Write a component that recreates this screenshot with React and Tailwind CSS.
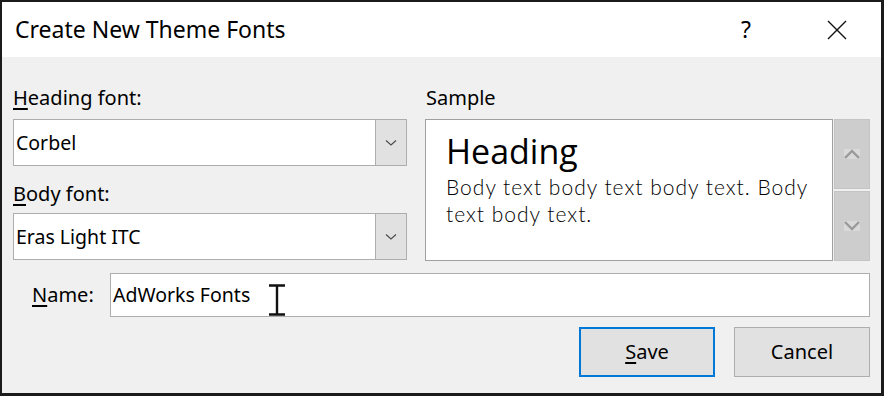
import React from 'react';

const ui = { fontFamily: '"Noto Sans", "Open Sans", sans-serif' };

function ComboArrow() {
  return (
    <svg width="12" height="8" viewBox="0 0 12 8">
      <polyline points="1,1.5 6,6 11,1.5" fill="none" stroke="#4a4a4a" strokeWidth="1.1" />
    </svg>
  );
}

function ComboBox({ value }) {
  return (
    <div className="flex h-[47px] w-full border border-[#adadad] bg-white">
      <div className="flex flex-1 items-center pl-[2px] text-[19.5px] text-black" style={ui}>
        {value}
      </div>
      <div className="flex w-[31px] items-center justify-center border-l border-[#adadad] bg-[#e1e1e1]">
        <ComboArrow />
      </div>
    </div>
  );
}

function ScrollButton({ up }) {
  return (
    <div className="flex flex-1 items-center justify-center border border-[#c4c4c4] bg-[#cdcdcd]">
      <svg width="16" height="10" viewBox="0 0 16 10">
        <rect x="0" y="0" width="16" height="10" fill="#d9d9d9" />
        {up ? (
          <polyline points="1,9 8,2 15,9" fill="none" stroke="#9a9a9a" strokeWidth="2.4" />
        ) : (
          <polyline points="1,1 8,8 15,1" fill="none" stroke="#9a9a9a" strokeWidth="2.4" />
        )}
      </svg>
    </div>
  );
}

export default function App() {
  return (
    <div className="flex h-[396px] w-[884px] flex-col border-t-2 border-l-2 border-r-[3px] border-b-[3px] border-[#1b1b1b] bg-[#f0f0f0]">
      {/* title bar */}
      <div className="flex h-[55px] items-center bg-white pl-[13px]" style={ui}>
        <span className="flex-1 text-[23px] text-black">Create New Theme Fonts</span>
        <span className="mr-[76px] text-[23px] text-black">?</span>
        <svg width="20" height="20" viewBox="0 0 20 20" className="mr-[34px]">
          <path d="M1 1 L19 19 M19 1 L1 19" stroke="#111" strokeWidth="1.4" />
        </svg>
      </div>

      <div className="flex flex-1 flex-col px-[11px] pt-[26px]" style={ui}>
        <div className="flex gap-[18px]">
          {/* left column */}
          <div className="flex w-[394px] flex-col">
            <div className="mb-[6px] flex h-[30px] items-center text-[20px] text-black">
              <span><span className="underline underline-offset-[3px]">H</span>eading font:</span>
            </div>
            <ComboBox value="Corbel" />
            <div className="mt-[13px] mb-[4px] flex h-[30px] items-center text-[20px] text-black">
              <span><span className="underline underline-offset-[3px]">B</span>ody font:</span>
            </div>
            <ComboBox value="Eras Light ITC" />
          </div>

          {/* sample */}
          <div className="flex flex-1 flex-col">
            <div className="mb-[6px] flex h-[30px] items-center pl-[1px] text-[20px] text-black">Sample</div>
            <div className="flex h-[142px] gap-[1px]">
              <div className="flex-1 border border-[#a0a0a0] bg-white pl-[20px] pr-[8px] pt-[11px]">
                <div
                  className="text-[34px] leading-[40px] text-black"
                  style={{ fontFamily: '"Open Sans", "Noto Sans", sans-serif' }}
                >
                  Heading
                </div>
                <div
                  className="mt-[2px] text-[21px] font-light leading-[27px] tracking-[1px] text-black"
                  style={{ fontFamily: 'Lato, "Open Sans", sans-serif' }}
                >
                  Body text body text body text. Body text body text.
                </div>
              </div>
              <div className="flex w-[36px] flex-col gap-[2px]">
                <ScrollButton up />
                <ScrollButton />
              </div>
            </div>
          </div>
        </div>

        {/* name row */}
        <div className="mt-[12px] flex h-[44px] items-center">
          <span className="ml-[19px] w-[78px] text-[20px] text-black">
            <span className="underline underline-offset-[3px]">N</span>ame:
          </span>
          <div className="relative flex h-full flex-1 items-center border border-[#adadad] bg-white pl-[2px] text-[19.5px] text-black">
            AdWorks Fonts
            <svg width="18" height="32" viewBox="0 0 18 32" className="absolute left-[157px] top-[10px]">
              <path d="M1 1.5 H17 M1 30.5 H17 M9 1.5 V30.5" stroke="#111" strokeWidth="2.4" />
            </svg>
          </div>
        </div>

        {/* buttons */}
        <div className="mt-[10px] flex justify-end gap-[19px]">
          <button className="h-[50px] w-[136px] border-2 border-[#0078d7] bg-[#e1e1e1] text-[20px] text-black">
            <span className="underline underline-offset-[3px]">S</span>ave
          </button>
          <button className="h-[50px] w-[136px] border border-[#adadad] bg-[#e1e1e1] text-[20px] text-black">
            Cancel
          </button>
        </div>
      </div>
    </div>
  );
}
